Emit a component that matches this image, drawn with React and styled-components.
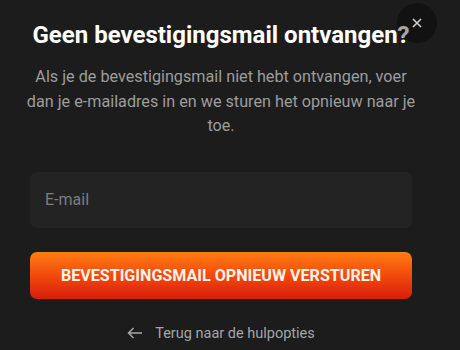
import React, { useState } from "react";
import styled, { createGlobalStyle } from "styled-components";

const GlobalStyle = createGlobalStyle`
  html, body {
    margin: 0;
    padding: 0;
    background: #1c1c1c;
    font-family: Roboto, "Liberation Sans", Arial, sans-serif;
  }
`;

const Modal = styled.div`
  position: relative;
  box-sizing: border-box;
  width: 460px;
  height: 350px;
  padding: 20px 48px 0 30px;
  background: #1c1c1c;
  display: flex;
  flex-direction: column;
`;

const CloseButton = styled.button`
  position: absolute;
  top: 3px;
  left: 397px;
  width: 40px;
  height: 40px;
  border-radius: 50%;
  border: none;
  background: rgba(0, 0, 0, 0.35);
  color: #cfcfcf;
  display: flex;
  align-items: center;
  justify-content: center;
  padding: 0;
  cursor: pointer;
`;

const Title = styled.h2`
  margin: 0 -10px;
  color: #ffffff;
  font-size: 24px;
  font-weight: 700;
  line-height: 30px;
  text-align: center;
  white-space: nowrap;
`;

const Description = styled.p`
  margin: 15px -6px 0;
  color: #9d9d9d;
  font-size: 16.2px;
  line-height: 24.5px;
  text-align: center;
`;

const Input = styled.input`
  box-sizing: border-box;
  margin-top: 33px;
  width: 100%;
  height: 56px;
  border: none;
  border-radius: 7px;
  background: #232323;
  padding: 0 15px;
  color: #ddd;
  font-family: inherit;
  font-size: 16px;
  outline: none;
  &::placeholder {
    color: #7d7d7d;
  }
`;

const SubmitButton = styled.button`
  margin-top: 24px;
  width: 100%;
  height: 47px;
  border: none;
  border-radius: 7px;
  background: linear-gradient(180deg, #ff7d12 0%, #f24a0d 50%, #d71d0b 100%);
  color: #fff4ea;
  font-family: inherit;
  font-size: 16.1px;
  font-weight: 700;
  cursor: pointer;
`;

const BackLink = styled.a`
  margin-top: 26px;
  display: flex;
  align-items: center;
  justify-content: center;
  gap: 12px;
  color: #a6a6a6;
  font-size: 14.5px;
  text-decoration: none;
  cursor: pointer;
`;

function App() {
  const [email, setEmail] = useState("");

  return (
    <>
      <GlobalStyle />
      <Modal>
        <Title>Geen bevestigingsmail ontvangen?</Title>
        <CloseButton aria-label="Sluiten">
          <svg width="10" height="10" viewBox="0 0 10 10">
            <path d="M1 1L9 9M9 1L1 9" stroke="currentColor" strokeWidth="1.6" />
          </svg>
        </CloseButton>
        <Description>
          Als je de bevestigingsmail niet hebt ontvangen, voer dan je e-mailadres in en
          we sturen het opnieuw naar je toe.
        </Description>
        <Input
          type="email"
          placeholder="E-mail"
          value={email}
          onChange={(e) => setEmail(e.target.value)}
        />
        <SubmitButton>BEVESTIGINGSMAIL OPNIEUW VERSTUREN</SubmitButton>
        <BackLink>
          <svg width="16" height="12" viewBox="0 0 16 12">
            <path
              d="M15 6H1.5M6.5 1L1.5 6L6.5 11"
              fill="none"
              stroke="currentColor"
              strokeWidth="1.5"
            />
          </svg>
          Terug naar de hulpopties
        </BackLink>
      </Modal>
    </>
  );
}

export default App;
